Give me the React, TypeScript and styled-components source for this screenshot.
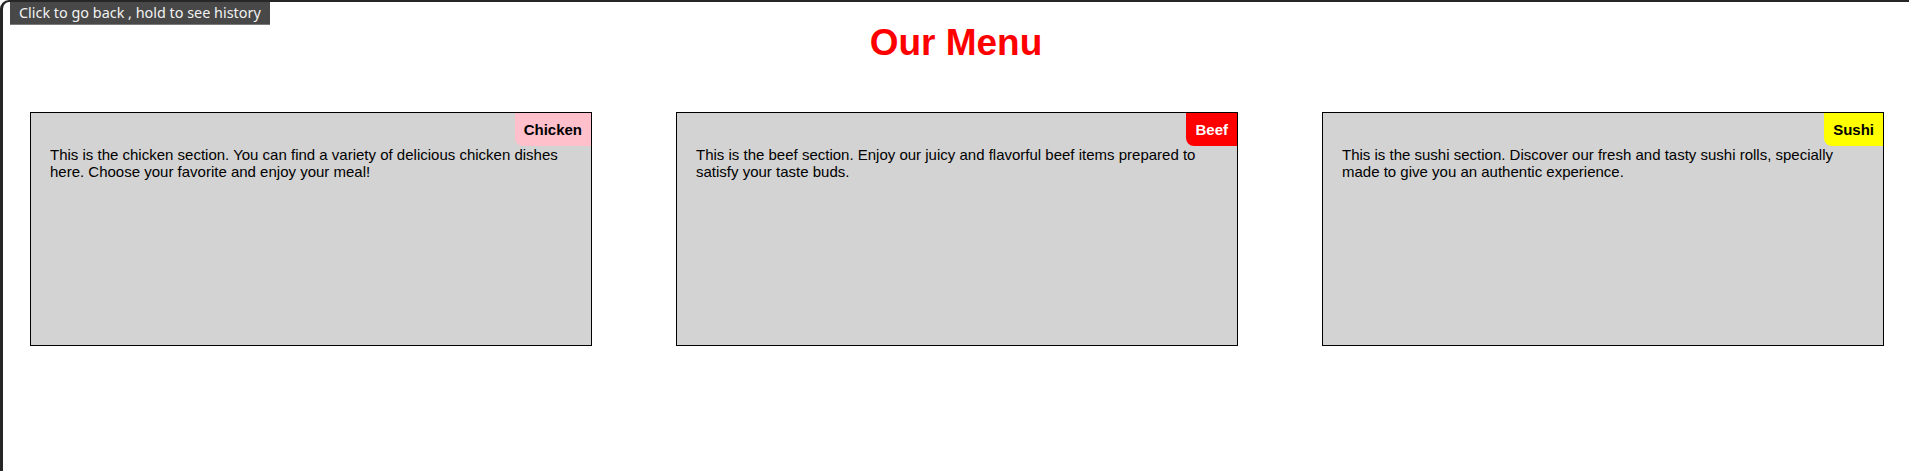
import React from "react";
import styled, { createGlobalStyle } from "styled-components";

const GlobalStyle = createGlobalStyle`
  html, body {
    margin: 0;
    padding: 0;
    background: #ffffff;
  }
  body {
    font-family: "Liberation Sans", Arial, sans-serif;
  }
  * { box-sizing: border-box; }
`;

const Frame = styled.div`
  position: relative;
  width: 1909px;
  height: 471px;
  border-top: 2px solid #262626;
  border-left: 3px solid #262626;
  border-top-left-radius: 9px;
  background: #ffffff;
  overflow: hidden;
`;

const BackTip = styled.div`
  position: absolute;
  top: -2px;
  left: 7px;
  height: 25px;
  padding: 0 9px;
  display: flex;
  align-items: center;
  background: #484848;
  border-bottom: 1px solid #7a7a7a;
  color: #f2f2f2;
  font-family: "Noto Sans", "Open Sans", sans-serif;
  font-size: 14.4px;
  white-space: nowrap;
`;

const Title = styled.h1`
  margin: 20px 0 0;
  text-align: center;
  color: #ff0000;
  font-family: "Liberation Sans", Arial, sans-serif;
  font-size: 37px;
  font-weight: bold;
  line-height: 42px;
`;

const CardRow = styled.div`
  display: flex;
  gap: 84px;
  padding-left: 27px;
  margin-top: 48px;
`;

const Card = styled.section`
  width: 562px;
  height: 234px;
  background: #d3d3d3;
  border: 1px solid #000000;
  display: flex;
  flex-direction: column;
`;

const LabelRow = styled.div`
  display: flex;
  justify-content: flex-end;
`;

const Label = styled.span<{ $bg: string; $fg: string }>`
  display: block;
  padding: 8px 9px 8px;
  background: ${(p) => p.$bg};
  color: ${(p) => p.$fg};
  font-family: "Liberation Sans", Arial, sans-serif;
  font-size: 15px;
  font-weight: bold;
  line-height: 17px;
  border-bottom-left-radius: 8px;
`;

const Text = styled.p`
  margin: 0;
  padding: 0 20px 0 19px;
  color: #000000;
  font-family: "Liberation Sans", Arial, sans-serif;
  font-size: 15px;
  line-height: 17px;
`;

const sections = [
  {
    name: "Chicken",
    bg: "#ffc0cb",
    fg: "#000000",
    text:
      "This is the chicken section. You can find a variety of delicious chicken dishes here. Choose your favorite and enjoy your meal!",
  },
  {
    name: "Beef",
    bg: "#ff0000",
    fg: "#ffffff",
    text:
      "This is the beef section. Enjoy our juicy and flavorful beef items prepared to satisfy your taste buds.",
  },
  {
    name: "Sushi",
    bg: "#ffff00",
    fg: "#000000",
    text:
      "This is the sushi section. Discover our fresh and tasty sushi rolls, specially made to give you an authentic experience.",
  },
];

export default function App() {
  return (
    <>
      <GlobalStyle />
      <Frame>
        <Title>Our Menu</Title>
        <CardRow>
          {sections.map((s) => (
            <Card key={s.name}>
              <LabelRow>
                <Label $bg={s.bg} $fg={s.fg}>
                  {s.name}
                </Label>
              </LabelRow>
              <Text>{s.text}</Text>
            </Card>
          ))}
        </CardRow>
        <BackTip>Click to go back , hold to see history</BackTip>
      </Frame>
    </>
  );
}
